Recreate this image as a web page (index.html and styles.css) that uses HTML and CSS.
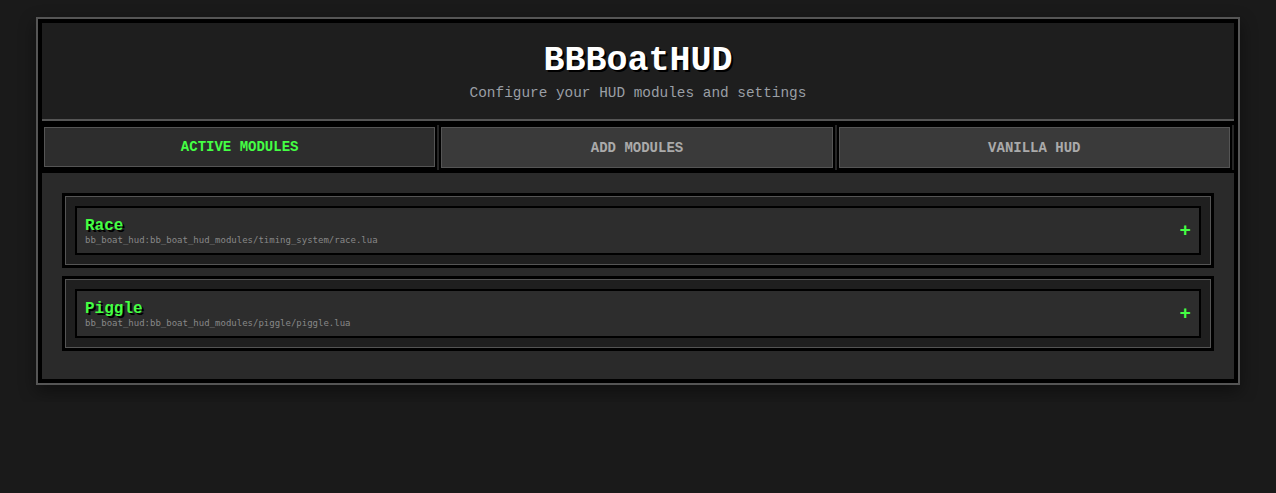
FILE: index.html
```html
<!DOCTYPE html>
<html lang="en">
<head>
  <meta charset="UTF-8" />
  <meta name="viewport" content="width=device-width, initial-scale=1.0" />
  <title>BBBoatHUD</title>
  <link rel="stylesheet" href="styles.css">
</head>
<body>
  <div class="app">
    <header class="header">
      <h1>BBBoatHUD</h1>
      <p class="subtitle">Configure your HUD modules and settings</p>
    </header>

    <nav class="tabs">
      <div class="tab-slot"><button class="tab active">ACTIVE MODULES</button></div>
      <div class="tab-slot"><button class="tab">ADD MODULES</button></div>
      <div class="tab-slot"><button class="tab">VANILLA HUD</button></div>
    </nav>

    <main class="content">
      <div class="module">
        <div class="module-inner">
          <div class="module-info">
            <div class="module-name">Race</div>
            <div class="module-path">bb_boat_hud:bb_boat_hud_modules/timing_system/race.lua</div>
          </div>
          <button class="module-add">+</button>
        </div>
      </div>

      <div class="module">
        <div class="module-inner">
          <div class="module-info">
            <div class="module-name">Piggle</div>
            <div class="module-path">bb_boat_hud:bb_boat_hud_modules/piggle/piggle.lua</div>
          </div>
          <button class="module-add">+</button>
        </div>
      </div>
    </main>
  </div>
</body>
</html>
```

FILE: styles.css
```css
body {
  font-family: 'Courier New', 'Liberation Mono', monospace;
  background-color: #1a1a1a;
  color: #ddd;
  margin: 0;
  padding: 17px 0;
}
.app {
  max-width: 1192px;
  margin: 0 auto;
  padding: 4px;
  background-color: #000;
  border: 2px solid #555;
  box-shadow: 0 6px 16px rgba(0, 0, 0, 0.45);
}
.header {
  background-color: #1e1e1e;
  border-bottom: 2px solid #555;
  text-align: center;
  padding: 18px 0 18px;
}
h1 {
  margin: 0 0 4px;
  font-size: 35px;
  font-weight: 700;
  color: #fff;
  text-shadow: 2px 2px 0 #000;
}
.subtitle {
  margin: 0;
  font-size: 14.4px;
  color: #9a9fa5;
}
.tabs {
  display: flex;
  padding: 4px 0 3px;
}
.tab-slot {
  flex: 1;
  display: flex;
  align-items: flex-start;
  padding: 2px;
  border-right: 2px solid #262626;
}
.tab {
  width: 100%;
  height: 41px;
  background-color: #3a3a3a;
  border: 1px solid #555;
  color: #aaa;
  font-family: inherit;
  font-size: 14px;
  font-weight: 700;
  cursor: pointer;
}
.tab.active {
  height: 40px;
  background-color: #2d2d2d;
  color: #44ff44;
}
.content {
  background-color: #2a2a2a;
  padding: 20px 20px 20px;
}
.module {
  background-color: #1f1f1f;
  border: 3px solid #000;
  box-shadow: inset 0 0 0 1px #555;
  padding: 10px;
  margin-bottom: 8px;
}
.module-inner {
  display: flex;
  align-items: center;
  justify-content: space-between;
  background-color: #2d2d2d;
  border: 2px solid #000;
  padding: 9px 8px 8px;
}
.module-name {
  font-size: 16px;
  font-weight: 700;
  color: #44ff44;
  text-shadow: 2px 2px 0 #000;
}
.module-path {
  font-family: 'DejaVu Sans Mono', monospace;
  font-size: 9px;
  color: #888;
}
.module-add {
  background: none;
  border: none;
  padding: 0;
  color: #44ff44;
  font-family: 'Liberation Mono', monospace;
  font-size: 19px;
  font-weight: 700;
  line-height: 1;
  cursor: pointer;
}
```
